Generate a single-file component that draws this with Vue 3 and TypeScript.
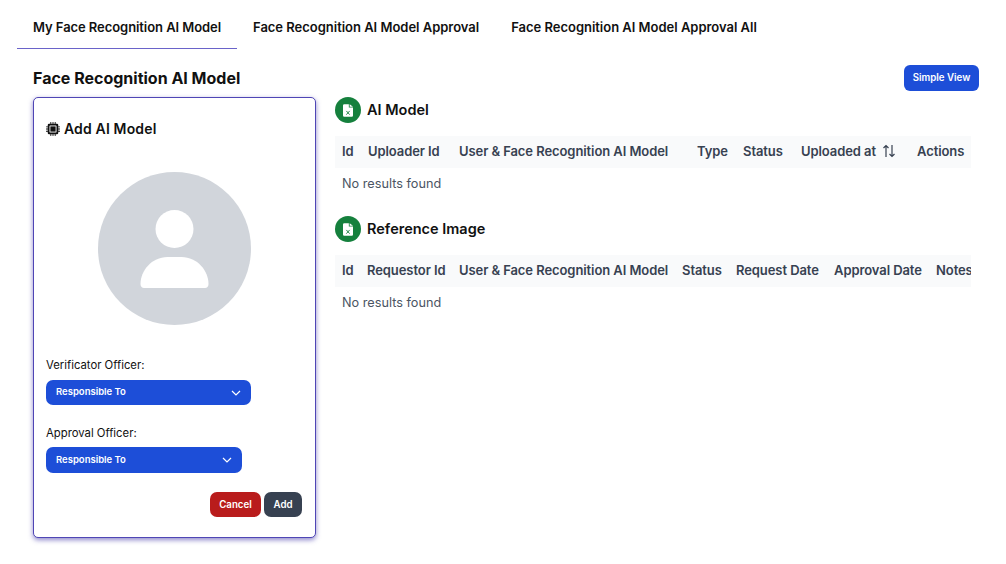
<script setup lang="ts">
interface Col { label: string; width: number; sort?: boolean }
interface Section { title: string; cols: Col[] }
const tabs = ['My Face Recognition AI Model', 'Face Recognition AI Model Approval', 'Face Recognition AI Model Approval All']
const sections: Section[] = [
  { title: 'AI Model', cols: [
    { label: 'Id', width: 26 }, { label: 'Uploader Id', width: 91 }, { label: 'User & Face Recognition AI Model', width: 238 },
    { label: 'Type', width: 46 }, { label: 'Status', width: 58 }, { label: 'Uploaded at', width: 116, sort: true }, { label: 'Actions', width: 61 } ] },
  { title: 'Reference Image', cols: [
    { label: 'Id', width: 25 }, { label: 'Requestor Id', width: 92 }, { label: 'User & Face Recognition AI Model', width: 223 },
    { label: 'Status', width: 54 }, { label: 'Request Date', width: 98 }, { label: 'Approval Date', width: 102 }, { label: 'Notes', width: 50 } ] }
]
const selects = [
  { label: 'Verificator Officer:', cls: 'wide' },
  { label: 'Approval Officer:', cls: 'narrow' }
]
</script>

<template>
  <div class="page">
    <nav class="tabs">
      <div v-for="(t, i) in tabs" :key="t" class="tab" :class="{ active: i === 0 }">{{ t }}</div>
    </nav>
    <div class="head">
      <h1>Face Recognition AI Model</h1>
      <button class="simple">Simple View</button>
    </div>
    <div class="body">
      <aside class="card">
        <h2>
          <svg class="chip" viewBox="0 0 16 16" width="14" height="14">
            <path fill="#111" d="M5 0h1v2h1.5V0h1v2H10V0h1v2h1.5A1.5 1.5 0 0 1 14 3.5V5h2v1h-2v1.5h2v1h-2V10h2v1h-2v1.5a1.5 1.5 0 0 1-1.5 1.5H11v2h-1v-2H8.500v2h-1v-2H6v2H5v-2H3.500A1.500 1.500 0 0 1 2 12.500V11H0v-1h2V8.500H0v-1h2V6H0V5h2V3.500A1.500 1.500 0 0 1 3.500 2H5z"/>
            <rect x="4" y="4" width="8" height="8" rx=".5" fill="#fff"/>
            <rect x="5" y="5" width="6" height="6" fill="#111"/>
          </svg>
          <span class="h2-text">Add AI Model</span>
        </h2>
        <div class="avatar">
          <svg viewBox="0 0 153 153" width="153" height="153">
            <circle cx="76.500" cy="76.500" r="76.500" fill="#d1d5db"/>
            <circle cx="76.500" cy="57" r="19" fill="#fff"/>
            <path fill="#fff" d="M42.500 112c0-13 11-27 27-27h14c16 0 27 14 27 27 0 2.500-1.500 4-3.500 4h-61c-2 0-3.500-1.500-3.500-4z"/>
          </svg>
        </div>
        <div v-for="s in selects" :key="s.label" class="field" :class="s.cls">
          <label>{{ s.label }}</label>
          <div class="select">
            <span class="sel-text">Responsible To</span>
            <svg viewBox="0 0 10 6" width="10" height="6"><path d="M1 1l4 4 4-4" fill="none" stroke="#fff" stroke-width="1.200"/></svg>
          </div>
        </div>
        <div class="actions">
          <button class="cancel">Cancel</button>
          <button class="add">Add</button>
        </div>
      </aside>
      <main class="content">
        <section v-for="s in sections" :key="s.title" class="section">
          <div class="sec-title">
            <span class="badge">
              <svg viewBox="0 0 12 15" width="10" height="13">
                <path fill="#fff" d="M1.500 0H7v4h5v9.500A1.500 1.500 0 0 1 10.500 15h-9A1.500 1.500 0 0 1 0 13.500v-12A1.500 1.500 0 0 1 1.500 0zM8 0l4 3H8z"/>
                <path d="M4 8l4 4.500M8 8l-4 4.500" stroke="#15803d" stroke-width="1.100"/>
              </svg>
            </span>
            <h3>{{ s.title }}</h3>
          </div>
          <div class="table">
            <div class="thead">
              <div v-for="c in s.cols" :key="c.label" class="th" :style="{ width: c.width + 'px' }">
                {{ c.label }}
                <svg v-if="c.sort" class="sort" viewBox="0 0 14 14" width="14" height="14">
                  <path d="M4 13V1.500M1.500 4L4 1.500 6.500 4M10 1v11.500M7.500 10l2.500 2.500 2.500-2.500" fill="none" stroke="#374151" stroke-width="1.200"/>
                </svg>
              </div>
            </div>
            <div class="empty">No results found</div>
          </div>
        </section>
      </main>
    </div>
  </div>
</template>

<style>
html, body { margin: 0; background: #fff; }
</style>

<style scoped>
.page { width: 1006px; height: 564px; overflow: hidden; box-sizing: border-box; padding: 6px 27px 0 17px; font-family: Inter, "Noto Sans", sans-serif; color: #111827; }
.tabs { display: flex; height: 43px; }
.tab { padding: 0 16px; display: flex; align-items: center; font-size: 13px; font-weight: 600; color: #111; border-bottom: 1px solid transparent; letter-spacing: -0.02px; white-space: nowrap; height: 42px; }
.tab.active { border-bottom-color: #6a63c9; width: 188px; letter-spacing: -0.07px; }
.head { display: flex; justify-content: space-between; align-items: center; height: 26px; margin-top: 16px; padding-left: 16px; }
h1 { margin: 0; font-size: 16px; font-weight: 700; color: #111; }
.simple { width: 75px; height: 26px; border: 0; border-radius: 6px; background: #1d4ed8; color: #fff; font: 600 9.700px Inter, sans-serif; padding: 0 0 2px; }
.body { display: flex; margin-top: 6px; padding-left: 16px; gap: 19px; }
.card { width: 283px; height: 441px; box-sizing: border-box; border: 1px solid #4f46b5; border-radius: 5px; box-shadow: 0 2px 5px rgba(67, 56, 170, .6); padding: 22px 13px 0 12px; background: #fff; }
h2 { margin: 0; display: flex; align-items: center; gap: 4px; font-size: 14px; font-weight: 600; letter-spacing: .15px; color: #111; height: 18px; }
.h2-text { padding-bottom: 2px; }
.chip { flex: none; }
.avatar { display: flex; justify-content: center; margin-top: 34px; margin-bottom: 33px; }
.avatar svg { display: block; }
.field { margin-bottom: 21px; }
.field.narrow { margin-bottom: 19px; }
label { display: block; font-size: 11.300px; font-weight: 400; color: #111; height: 14px; line-height: 14px; margin-bottom: 8px; }
.field.narrow label { margin-bottom: 7px; }
.select { box-sizing: border-box; height: 25px; border-radius: 7px; background: #1d4ed8; color: #fff; font-size: 9.500px; font-weight: 600; padding: 0 10px; display: flex; align-items: center; justify-content: space-between; }
.sel-text { padding-bottom: 2px; }
.field.wide .select { width: 205px; }
.field.narrow .select { width: 196px; height: 26px; }
.actions { display: flex; justify-content: flex-end; gap: 3px; }
.actions button { height: 25px; border: 0; border-radius: 7px; color: #fff; font: 600 9.700px Inter, sans-serif; padding: 0 0 1px; }
.cancel { width: 51px; background: #b91c1c; }
.add { width: 38px; background: #374151; }
.content { width: 636px; flex: none; }
.section { margin-bottom: 24px; }
.sec-title { display: flex; align-items: center; gap: 6px; height: 26px; }
.badge { width: 26px; height: 26px; border-radius: 50%; background: #15803d; display: flex; align-items: center; justify-content: center; }
h3 { margin: 0 0 2px; font-size: 14.500px; font-weight: 600; color: #111; }
.table { margin-top: 13px; overflow: hidden; }
.thead { display: flex; height: 32px; background: #f9fafb; white-space: nowrap; }
.th { flex: none; box-sizing: border-box; padding: 0 0 2px 7px; font-size: 13px; font-weight: 600; color: #374151; display: flex; align-items: center; gap: 6px; letter-spacing: -0.08px; }
.sort { flex: none; }
.empty { padding: 8px 7px 0; font-size: 12.700px; color: #4b5563; line-height: 16px; }
</style>
